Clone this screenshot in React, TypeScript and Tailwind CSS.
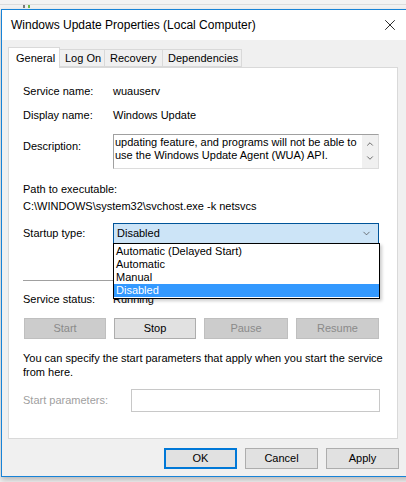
import { ChevronDown, ChevronUp, X } from "lucide-react";

const font = { fontFamily: '"Liberation Sans", Arial, sans-serif' };

type BtnProps = { label: string; disabled?: boolean; primary?: boolean; className?: string };

function WinButton({ label, disabled, primary, className = "" }: BtnProps) {
  const base = "flex items-center justify-center h-[21px] text-[11px] leading-none";
  if (disabled) {
    return (
      <div className={`${base} bg-[#cccccc] border border-[#bfbfbf] text-[#8a8a8a] ${className}`}>
        {label}
      </div>
    );
  }
  if (primary) {
    return (
      <div className={`${base} bg-[#e1e1e1] border-2 border-[#0078d7] text-black ${className}`}>
        {label}
      </div>
    );
  }
  return (
    <div className={`${base} bg-[#e1e1e1] border border-[#adadad] text-black ${className}`}>
      {label}
    </div>
  );
}

const options = ["Automatic (Delayed Start)", "Automatic", "Manual", "Disabled"];

export default function App() {
  return (
    <div className="w-[406px] h-[482px] bg-[#f3f3f3] overflow-hidden relative text-black" style={font}>
      <div className="absolute left-[0px] top-[4px] w-[406px] h-px bg-[#dcdcdc]" />
      <div className="absolute left-[23px] top-[5px] w-[2px] h-[3px] bg-[#7a7a7a]" />
      <div className="absolute left-[28px] top-[5px] w-[2px] h-[3px] bg-[#6fb848]" />
      <div className="ml-[1px] mt-[9px] w-[410px] border-t border-l border-b border-[#1883d7] bg-[#f0f0f0] shadow-[0_3px_6px_rgba(0,0,0,0.25)]">
        {/* title bar */}
        <div className="h-[30px] bg-white flex items-center justify-between pl-[9px] pr-[12px]">
          <span className="text-[12px]">Windows Update Properties (Local Computer)</span>
          <X className="w-[18px] h-[18px]" strokeWidth={1.1} />
        </div>

        <div className="pl-[6px] pt-[7px] pr-[13px]">
          {/* tabs */}
          <div className="flex items-end h-[20px] text-[11px]">
            <div className="h-[21px] -mb-px z-10 px-[7px] bg-white border border-b-0 border-[#d9d9d9] flex items-center w-[52px]">
              General
            </div>
            {["Log On", "Recovery", "Dependencies"].map((t, i) => (
              <div
                key={t}
                className={`h-[18px] whitespace-nowrap border border-l-0 border-[#d9d9d9] bg-[#f0f0f0] flex items-center px-[5px] ${
                  i === 0 ? "w-[45px]" : i === 1 ? "w-[58px]" : "w-[79px]"
                }`}
              >
                {t}
              </div>
            ))}
          </div>

          {/* panel */}
          <div className="relative w-[390px] h-[372px] bg-white border border-[#d9d9d9] pl-[14px] pt-[15px] text-[11px]">
            <div className="flex h-[16px] items-center">
              <span className="w-[90px]">Service name:</span>
              <span>wuauserv</span>
            </div>
            <div className="flex h-[16px] items-center mt-[8px]">
              <span className="w-[90px]">Display name:</span>
              <span>Windows Update</span>
            </div>
            <div className="flex mt-[11px]">
              <span className="w-[90px] mt-[4px] leading-[16px]">Description:</span>
              <div className="w-[266px] h-[35px] border border-[#a0a0a0] border-r-[#dcdcdc] border-b-[#dcdcdc] flex">
                <div className="flex-1 leading-[13px] pt-[1px] pl-[1px]">
                  updating feature, and programs will not be able to use the Windows Update Agent (WUA) API.
                </div>
                <div className="w-[16px] bg-[#f0f0f0] flex flex-col items-center pt-[4px] gap-[4px]">
                  <ChevronUp className="w-[10px] h-[10px] text-[#606060]" strokeWidth={2.2} />
                  <ChevronDown className="w-[10px] h-[10px] text-[#606060]" strokeWidth={2.2} />
                </div>
              </div>
            </div>
            <div className="h-[16px] flex items-center mt-[12px]">Path to executable:</div>
            <div className="h-[16px] flex items-center mt-[1px]">C:\WINDOWS\system32\svchost.exe -k netsvcs</div>
            <div className="flex items-center mt-[9px]">
              <span className="w-[90px]">Startup type:</span>
              <div className="w-[266px] h-[21px] bg-[#cce4f7] border border-[#005499] flex items-center justify-between pl-[3px] pr-[6px]">
                <span>Disabled</span>
                <ChevronDown className="w-[11px] h-[11px] text-[#404040]" strokeWidth={1.5} />
              </div>
            </div>
            <div className="mt-[36px] w-[90px] h-px bg-[#a0a0a0]" />
            <div className="flex h-[16px] items-center mt-[10px]">
              <span className="w-[90px]">Service status:</span>
              <span>Running</span>
            </div>
            <div className="flex gap-[8px] mt-[11px] ml-[1px]">
              <WinButton label="Start" disabled className="w-[82px]" />
              <WinButton label="Stop" className="w-[82px]" />
              <WinButton label="Pause" disabled className="w-[84px]" />
              <WinButton label="Resume" disabled className="w-[83px]" />
            </div>
            <div className="mt-[12px] leading-[14px] w-[360px]">
              You can specify the start parameters that apply when you start the service from here.
            </div>
            <div className="flex items-center mt-[10px]">
              <span className="w-[108px] text-[#a0a0a0]">Start parameters:</span>
              <div className="w-[249px] h-[23px] border border-[#c8c8c8] bg-white" />
            </div>

            {/* open dropdown list */}
            <div className="absolute left-[104px] top-[175px] w-[267px] bg-white border border-black shadow-[2px_2px_3px_rgba(0,0,0,0.2)] py-[1px]">
              {options.map((o) => (
                <div
                  key={o}
                  className={`h-[13px] leading-[13px] pl-[2px] ${
                    o === "Disabled" ? "bg-[#3399ff] text-white" : ""
                  }`}
                >
                  {o}
                </div>
              ))}
            </div>
          </div>

          {/* footer */}
          <div className="flex gap-[8px] pl-[156px] pt-[9px] pb-[7px] w-[393px]">
            <WinButton label="OK" primary className="w-[73px]" />
            <WinButton label="Cancel" className="w-[73px]" />
            <WinButton label="Apply" className="w-[73px]" />
          </div>
        </div>
      </div>
    </div>
  );
}
